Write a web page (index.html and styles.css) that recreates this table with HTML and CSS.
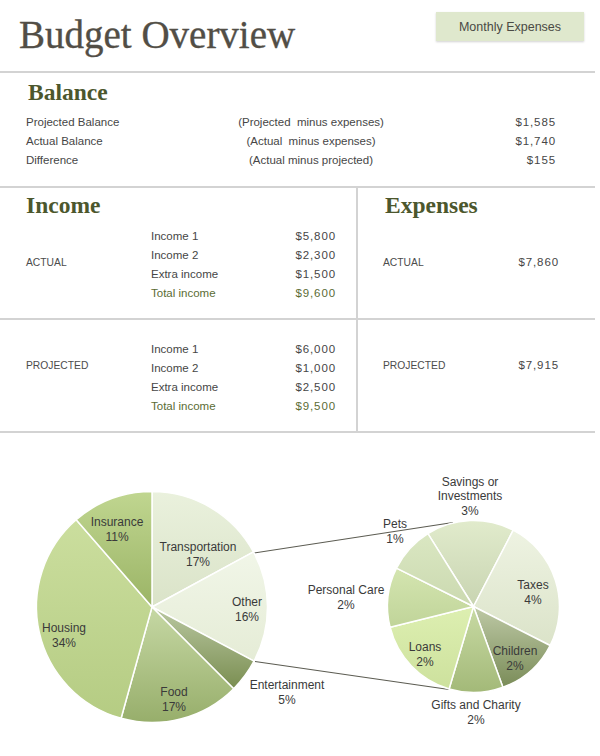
FILE: index.html
```html
<!DOCTYPE html>
<html lang="en">
<head>
<meta charset="utf-8">
<title>Budget Overview</title>
<link rel="stylesheet" href="styles.css">
</head>
<body>
<div class="page">
  <header class="top">
    <h1 class="title">Budget Overview</h1>
    <div class="btn">Monthly Expenses</div>
  </header>

  <section class="balance">
    <h2 class="heading heading-indent">Balance</h2>
    <div class="bal-row"><span>Projected Balance</span><span class="note">(Projected&nbsp; minus expenses)</span><span class="amt">$1,585</span></div>
    <div class="bal-row"><span>Actual Balance</span><span class="note">(Actual&nbsp; minus expenses)</span><span class="amt">$1,740</span></div>
    <div class="bal-row"><span>Difference</span><span class="note">(Actual minus projected)</span><span class="amt">$155</span></div>
  </section>

  <section class="ie">
    <div class="cell left first">
      <h2 class="heading">Income</h2>
      <div class="block block-top">
        <div class="tag tag-actual">ACTUAL</div>
        <div class="items">
          <div class="item"><span>Income 1</span><span class="amt">$5,800</span></div>
          <div class="item"><span>Income 2</span><span class="amt">$2,300</span></div>
          <div class="item"><span>Extra income</span><span class="amt">$1,500</span></div>
          <div class="item total"><span>Total income</span><span class="amt">$9,600</span></div>
        </div>
      </div>
    </div>
    <div class="cell right first">
      <h2 class="heading heading-indent">Expenses</h2>
      <div class="exp-line exp-actual"><span class="tag">ACTUAL</span><span class="amt">$7,860</span></div>
    </div>
    <div class="cell left second">
      <div class="block">
        <div class="tag tag-proj">PROJECTED</div>
        <div class="items">
          <div class="item"><span>Income 1</span><span class="amt">$6,000</span></div>
          <div class="item"><span>Income 2</span><span class="amt">$1,000</span></div>
          <div class="item"><span>Extra income</span><span class="amt">$2,500</span></div>
          <div class="item total"><span>Total income</span><span class="amt">$9,500</span></div>
        </div>
      </div>
    </div>
    <div class="cell right second">
      <div class="exp-line exp-proj"><span class="tag">PROJECTED</span><span class="amt">$7,915</span></div>
    </div>
  </section>
</div>

<svg class="charts" width="600" height="323" viewBox="0 433 600 323" xmlns="http://www.w3.org/2000/svg">
  <defs>
    <linearGradient id="gTrans" x1="0" y1="0" x2="0" y2="1"><stop offset="0" stop-color="#eaf1dd"/><stop offset="1" stop-color="#dae3c8"/></linearGradient>
    <linearGradient id="gOther" x1="0" y1="0" x2="0" y2="1"><stop offset="0" stop-color="#f1f6e8"/><stop offset="1" stop-color="#e5ecd6"/></linearGradient>
    <linearGradient id="gEnt" x1="0" y1="0" x2="0" y2="1"><stop offset="0" stop-color="#bac8a2"/><stop offset="1" stop-color="#7a8e51"/></linearGradient>
    <linearGradient id="gFood" x1="0" y1="0" x2="0" y2="1"><stop offset="0" stop-color="#c6d8a4"/><stop offset="1" stop-color="#97ae6b"/></linearGradient>
    <linearGradient id="gHouse" x1="0" y1="0" x2="0" y2="1"><stop offset="0" stop-color="#cbde9e"/><stop offset="1" stop-color="#b5cc83"/></linearGradient>
    <linearGradient id="gIns" x1="0" y1="0" x2="0" y2="1"><stop offset="0" stop-color="#c0d690"/><stop offset="1" stop-color="#9bb466"/></linearGradient>

    <linearGradient id="gSav" x1="0" y1="0" x2="0" y2="1"><stop offset="0" stop-color="#e1ebcc"/><stop offset="1" stop-color="#c8d4b1"/></linearGradient>
    <linearGradient id="gTax" x1="0" y1="0" x2="0" y2="1"><stop offset="0" stop-color="#eef3e2"/><stop offset="1" stop-color="#dbe3c9"/></linearGradient>
    <linearGradient id="gChild" x1="0" y1="0" x2="0" y2="1"><stop offset="0" stop-color="#bec9a6"/><stop offset="1" stop-color="#7a8c58"/></linearGradient>
    <linearGradient id="gGift" x1="0" y1="0" x2="0" y2="1"><stop offset="0" stop-color="#c8daa4"/><stop offset="1" stop-color="#a3b978"/></linearGradient>
    <linearGradient id="gLoan" x1="0" y1="0" x2="0" y2="1"><stop offset="0" stop-color="#ddefb1"/><stop offset="1" stop-color="#cde19d"/></linearGradient>
    <linearGradient id="gCare" x1="0" y1="0" x2="0" y2="1"><stop offset="0" stop-color="#d4e5b0"/><stop offset="1" stop-color="#c0d499"/></linearGradient>
    <linearGradient id="gPets" x1="0" y1="0" x2="0" y2="1"><stop offset="0" stop-color="#dae7c2"/><stop offset="1" stop-color="#cbd9b0"/></linearGradient>
  </defs>

  <line class="connector" x1="254" y1="553" x2="453" y2="522.5"/>
  <line class="connector" x1="255" y1="661.5" x2="449" y2="689.5"/>

  <g class="slices">
    <path fill="url(#gTrans)" d="M152 607 L152 491.5 A115.5 115.5 0 0 1 253.5 551.9 Z"/>
    <path fill="url(#gOther)" d="M152 607 L253.5 551.9 A115.5 115.5 0 0 1 254 661.2 Z"/>
    <path fill="url(#gEnt)" d="M152 607 L254 661.2 A115.5 115.5 0 0 1 233.7 688.7 Z"/>
    <path fill="url(#gFood)" d="M152 607 L233.7 688.7 A115.5 115.5 0 0 1 121.1 718.3 Z"/>
    <path fill="url(#gHouse)" d="M152 607 L121.1 718.3 A115.5 115.5 0 0 1 76.2 519.8 Z"/>
    <path fill="url(#gIns)" d="M152 607 L76.2 519.8 A115.5 115.5 0 0 1 152 491.5 Z"/>

    <path fill="url(#gSav)" d="M473.5 606.5 L427.9 533.6 A86 86 0 0 1 513.2 530.2 Z"/>
    <path fill="url(#gTax)" d="M473.5 606.5 L513.2 530.2 A86 86 0 0 1 550.1 645.5 Z"/>
    <path fill="url(#gChild)" d="M473.5 606.5 L550.1 645.5 A86 86 0 0 1 502.9 687.3 Z"/>
    <path fill="url(#gGift)" d="M473.5 606.5 L502.9 687.3 A86 86 0 0 1 449.1 689 Z"/>
    <path fill="url(#gLoan)" d="M473.5 606.5 L449.1 689 A86 86 0 0 1 390.1 627.3 Z"/>
    <path fill="url(#gCare)" d="M473.5 606.5 L390.1 627.3 A86 86 0 0 1 396.5 568.1 Z"/>
    <path fill="url(#gPets)" d="M473.5 606.5 L396.5 568.1 A86 86 0 0 1 427.9 533.6 Z"/>
  </g>

  <g class="labels">
    <text class="lbl" x="117" y="526">Insurance</text>
    <text class="lbl" x="117" y="541">11%</text>
    <text class="lbl" x="198" y="550.5">Transportation</text>
    <text class="lbl" x="198" y="565.5">17%</text>
    <text class="lbl" x="247" y="605.5">Other</text>
    <text class="lbl" x="247" y="620.5">16%</text>
    <text class="lbl" x="64" y="632">Housing</text>
    <text class="lbl" x="64" y="647">34%</text>
    <text class="lbl" x="174" y="696">Food</text>
    <text class="lbl" x="174" y="711">17%</text>
    <text class="lbl" x="287" y="689">Entertainment</text>
    <text class="lbl" x="287" y="703.5">5%</text>

    <text class="lbl" x="470" y="485.5">Savings or</text>
    <text class="lbl" x="470" y="500">Investments</text>
    <text class="lbl" x="470" y="514.5">3%</text>
    <text class="lbl" x="395" y="528">Pets</text>
    <text class="lbl" x="395" y="543">1%</text>
    <text class="lbl" x="346" y="594">Personal Care</text>
    <text class="lbl" x="346" y="609">2%</text>
    <text class="lbl" x="533" y="589">Taxes</text>
    <text class="lbl" x="533" y="604">4%</text>
    <text class="lbl" x="425" y="650.5">Loans</text>
    <text class="lbl" x="425" y="665.5">2%</text>
    <text class="lbl" x="515" y="654.5">Children</text>
    <text class="lbl" x="515" y="669.5">2%</text>
    <text class="lbl" x="476" y="709">Gifts and Charity</text>
    <text class="lbl" x="476" y="723.5">2%</text>
  </g>
</svg>
</body>
</html>
```

FILE: styles.css
```css
html, body {
  margin: 0;
  padding: 0;
  background: #ffffff;
}

body {
  font-family: "Liberation Sans", Arial, sans-serif;
  color: #484848;
  width: 600px;
  height: 756px;
  overflow: hidden;
}

.page {
  width: 595px;
}

/* Header */
.top {
  display: flex;
  justify-content: space-between;
  align-items: flex-start;
  height: 71px;
  border-bottom: 2px solid #d3d3d3;
}

.title {
  margin: 0;
  padding: 13px 0 0 19px;
  font-family: "Liberation Serif", "Times New Roman", serif;
  font-weight: normal;
  font-size: 39px;
  line-height: 44px;
  color: #524e46;
  -webkit-text-stroke: 0.35px #524e46;
}

.btn {
  margin: 12px 11px 0 0;
  width: 148px;
  height: 29px;
  box-sizing: border-box;
  display: flex;
  align-items: center;
  justify-content: center;
  background: #dfe8cd;
  color: #4a4a44;
  font-size: 12.5px;
  box-shadow: 0 1px 2px rgba(0, 0, 0, 0.18);
}

/* Headings */
.heading {
  margin: 0;
  font-family: "Liberation Serif", "Times New Roman", serif;
  font-weight: bold;
  font-size: 23.5px;
  line-height: 26px;
  color: #4c572d;
}

.heading-indent {
  margin-left: 2px;
}

/* Balance */
.balance {
  padding: 6px 39px 16px 26px;
  border-bottom: 2px solid #d3d3d3;
}

.balance .heading {
  margin-bottom: 8px;
}

.bal-row {
  display: grid;
  grid-template-columns: 200px 170px 1fr;
  height: 19px;
  line-height: 19px;
  font-size: 11.5px;
  color: #464646;
}

.note {
  text-align: center;
  white-space: nowrap;
}

.amt {
  text-align: right;
  letter-spacing: 0.9px;
}

/* Income / Expenses */
.ie {
  display: grid;
  grid-template-columns: 358px 1fr;
  border-bottom: 2px solid #d3d3d3;
}

.cell {
  box-sizing: border-box;
}

.cell.left {
  border-right: 2px solid #d3d3d3;
  padding-left: 26px;
}

.cell.right {
  padding-left: 25px;
  padding-right: 36px;
}

.cell.first {
  padding-top: 4px;
  padding-bottom: 15px;
  border-bottom: 2px solid #d3d3d3;
}

.cell.second {
  padding-top: 20px;
  padding-bottom: 15px;
}

.block {
  display: flex;
}

.block-top {
  margin-top: 9px;
}

.tag {
  font-size: 10.3px;
  color: #4c4c4c;
  line-height: 19px;
}

.block .tag {
  width: 125px;
  flex: none;
}

.tag-actual {
  padding-top: 26px;
}

.tag-proj {
  padding-top: 16px;
}

.items {
  width: 184px;
}

.item {
  display: grid;
  grid-template-columns: 120px 64px;
  height: 19px;
  line-height: 19px;
  font-size: 11.5px;
  color: #464646;
}

.item .amt {
  margin-right: -1px;
}

.item.total {
  color: #5b6c34;
}

.exp-line {
  display: flex;
  justify-content: space-between;
  align-items: center;
  height: 19px;
  line-height: 19px;
  font-size: 11.5px;
  color: #464646;
}

.exp-actual {
  margin-top: 35px;
}

.exp-proj {
  margin-top: 16px;
}

/* Charts */
.charts {
  display: block;
}

.connector {
  stroke: #5c5c52;
  stroke-width: 1.2;
}

.slices path {
  stroke: #ffffff;
  stroke-width: 1.5;
  stroke-linejoin: round;
}

.lbl {
  font-family: "Liberation Sans", Arial, sans-serif;
  font-size: 12px;
  fill: #3a3a3a;
  text-anchor: middle;
}
```
